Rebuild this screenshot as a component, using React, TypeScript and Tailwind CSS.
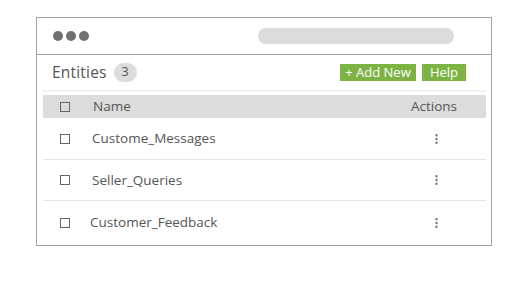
import { MoreVertical } from 'lucide-react';

const rows = [
  { name: 'Custome_Messages', indent: 'pl-[22px]' },
  { name: 'Seller_Queries', indent: 'pl-[22px]' },
  { name: 'Customer_Feedback', indent: 'pl-[20px]' },
];

function Box() {
  return <span className="block w-[10px] h-[10px] border border-[#666] shrink-0" />;
}

export default function App() {
  return (
    <div className="w-[525px] h-[293px] bg-white pt-[17px] pl-[36px] font-['Open_Sans',sans-serif] text-[#555]">
      <div className="w-[456px] h-[229px] border border-[#a3a3a3] flex flex-col">
        {/* Barra de janela */}
        <div className="h-[37px] shrink-0 border-b border-[#a3a3a3] flex items-center pl-[16px] pr-[37px]">
          <div className="flex gap-[3px]">
            <span className="w-[10px] h-[10px] rounded-full bg-[#707070]" />
            <span className="w-[10px] h-[10px] rounded-full bg-[#707070]" />
            <span className="w-[10px] h-[10px] rounded-full bg-[#707070]" />
          </div>
          <div className="ml-auto w-[196px] h-[16px] rounded-full bg-[#dcdcdc]" />
        </div>

        {/* Toolbar */}
        <div className="h-[35px] shrink-0 flex items-center pl-[15px] pr-[25px]">
          <span className="text-[15.5px] tracking-[0.2px]">Entities</span>
          <span className="ml-[7px] w-[23px] h-[19px] rounded-full bg-[#dcdcdc] text-[12.5px] flex items-center justify-center">3</span>
          <button className="ml-auto h-[17px] w-[76px] bg-[#7cb342] text-white text-[13px] leading-none flex items-center justify-center">+ Add New</button>
          <button className="ml-[6px] h-[17px] w-[44px] bg-[#7cb342] text-white text-[13px] leading-none flex items-center justify-center">Help</button>
        </div>

        {/* Tabela */}
        <div className="mx-[6px] mr-[5px] flex-1 flex flex-col">
          <div className="h-[2px] bg-[#f1f1f1]" />
          <div className="mt-[3px] h-[23px] bg-[#dcdcdc] flex items-center pl-[17px] pr-[29px] text-[13.5px]">
            <Box />
            <span className="pl-[23px]">Name</span>
            <span className="ml-auto">Actions</span>
          </div>
          {rows.map((r, i) => (
            <div
              key={r.name}
              className={`flex items-center pl-[17px] text-[13.5px] ${i === 0 ? 'h-[42px] border-b border-[#e6e6e6]' : i === 1 ? 'h-[41px] border-b border-[#e6e6e6]' : 'h-[43px]'}`}
            >
              <Box />
              <span className={r.indent}>{r.name}</span>
              <MoreVertical className="ml-auto mr-[43px] w-[13px] h-[14px] text-[#777]" strokeWidth={2.5} />
            </div>
          ))}
        </div>
      </div>
    </div>
  );
}
